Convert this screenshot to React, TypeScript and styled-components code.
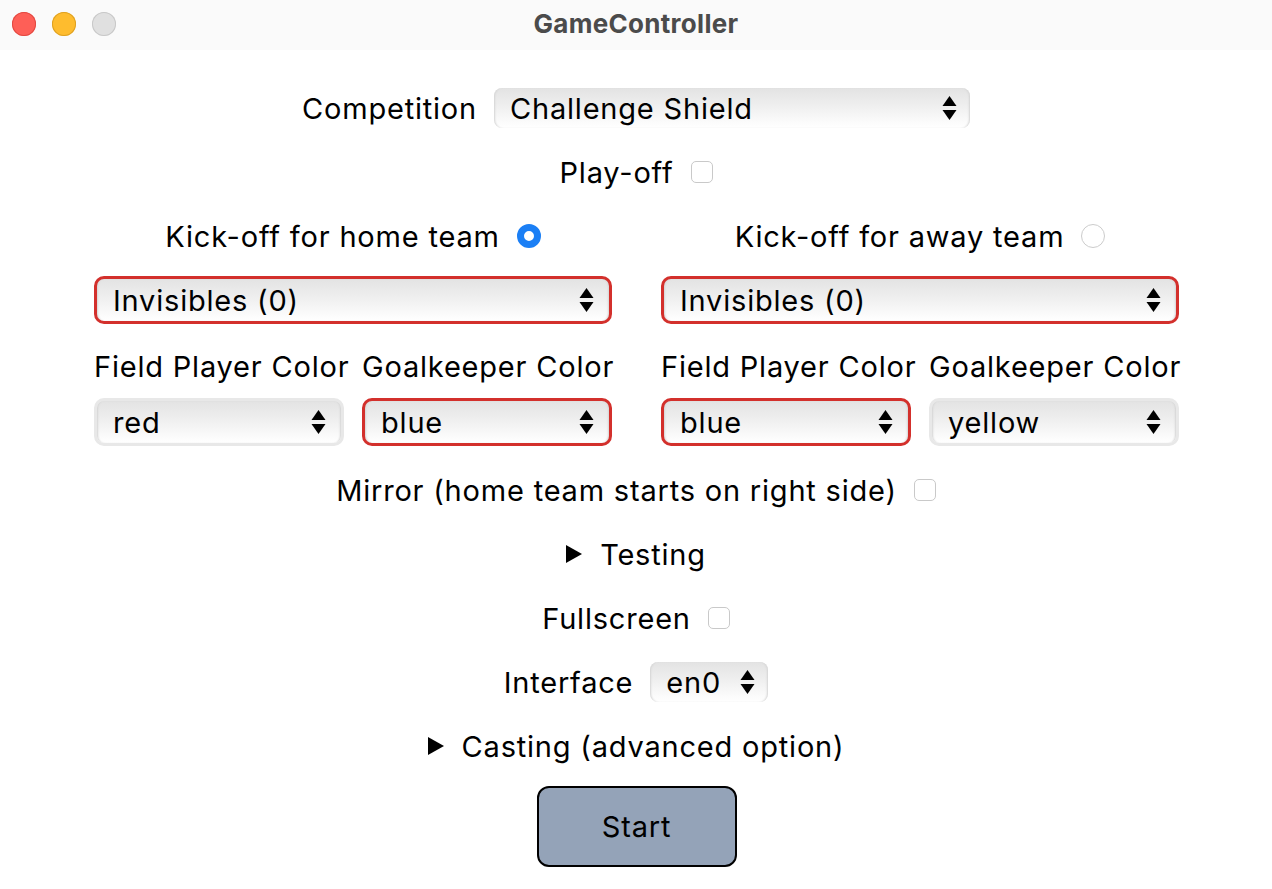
import React from 'react';
import styled, { createGlobalStyle } from 'styled-components';

const GlobalStyle = createGlobalStyle`
  html, body {
    margin: 0;
    padding: 0;
    background: #ffffff;
  }
  body {
    font-family: Inter, "Noto Sans", "Liberation Sans", sans-serif;
    color: #000;
  }
`;

const Window = styled.div`
  width: 1272px;
  height: 889px;
  background: #ffffff;
  overflow: hidden;
`;

const TitleBar = styled.div`
  position: relative;
  height: 50px;
  background: #fafafa;
  display: flex;
  align-items: center;
  justify-content: center;
`;

const Lights = styled.div`
  position: absolute;
  left: 12px;
  top: 12px;
  display: flex;
  gap: 16px;
`;

const Light = styled.span<{ $fill: string; $edge: string }>`
  width: 24px;
  height: 24px;
  border-radius: 50%;
  background: ${(p) => p.$fill};
  box-shadow: inset 0 0 0 1px ${(p) => p.$edge};
`;

const Title = styled.div`
  font-size: 26px;
  font-weight: 700;
  letter-spacing: 0.3px;
  color: #4b4b4b;
  margin-top: -4px;
`;

const Content = styled.div`
  display: flex;
  flex-direction: column;
  align-items: center;
  padding-top: 38px;
  gap: 24px;
  font-size: 29px;
  letter-spacing: 0.8px;
`;

const Row = styled.div`
  height: 40px;
  display: flex;
  align-items: center;
  justify-content: center;
  gap: 17px;
`;

const Teams = styled.div`
  display: grid;
  grid-template-columns: 518px 518px;
  column-gap: 49px;
  margin-left: 1px;
`;

const TeamColumn = styled.div`
  display: flex;
  flex-direction: column;
`;

const ColorGrid = styled.div`
  display: grid;
  grid-template-columns: 250px 250px;
  column-gap: 18px;
  row-gap: 12px;
  margin-top: 22px;
`;

const ColorLabel = styled.div`
  height: 40px;
  display: flex;
  align-items: center;
  white-space: nowrap;
`;

const SelectBox = styled.div<{ $width?: number; $height?: number; $ring?: 'red' | 'grey' | 'none' }>`
  box-sizing: border-box;
  width: ${(p) => (p.$width ? `${p.$width}px` : '100%')};
  height: ${(p) => p.$height ?? 48}px;
  display: flex;
  align-items: center;
  justify-content: space-between;
  padding: 0 ${(p) => (p.$ring === 'none' ? 13 : 15)}px 0 ${(p) => (p.$ring === 'none' ? 16 : 16)}px;
  border-radius: ${(p) => (p.$ring === 'none' ? 8 : 10)}px;
  border: ${(p) =>
    p.$ring === 'red' ? '3px solid #d3302c' : p.$ring === 'grey' ? '3px solid #e8e8e8' : 'none'};
  background: linear-gradient(180deg, #e3e3e3 0%, #efefef 45%, #fbfbfb 85%, #ffffff 100%);
  box-shadow: inset 2px 0 2px -1px #d4d4d4, inset -2px 0 2px -1px #d4d4d4;
  white-space: nowrap;
`;

const SpinnerIcon = () => (
  <svg width="15" height="26" viewBox="0 0 15 26">
    <polygon points="7.5,1 14.5,11 0.5,11" fill="#000" />
    <polygon points="0.5,15 14.5,15 7.5,25" fill="#000" />
  </svg>
);

const Check = styled.span`
  box-sizing: border-box;
  width: 22px;
  height: 22px;
  border-radius: 5px;
  border: 1px solid #c9c9c9;
  background: #fff;
`;

const Radio = styled.span<{ $on?: boolean }>`
  box-sizing: border-box;
  width: 24px;
  height: 24px;
  border-radius: 50%;
  border: ${(p) => (p.$on ? '7px solid #1b7ff5' : '1px solid #cccccc')};
  background: #fff;
`;

const Disclosure = styled.div`
  height: 40px;
  display: flex;
  align-items: center;
  gap: 18px;
`;

const StartButton = styled.button`
  box-sizing: border-box;
  width: 200px;
  height: 81px;
  margin-top: -4px;
  margin-left: 1px;
  border: 2px solid #000;
  border-radius: 12px;
  background: #94a3b8;
  font-family: inherit;
  font-size: 29px;
  letter-spacing: 0.8px;
  color: #000;
`;

const Triangle = () => (
  <svg width="16" height="18" viewBox="0 0 16 18">
    <polygon points="0,0 16,9 0,18" fill="#000" />
  </svg>
);

const Select = ({
  value,
  ring = 'none',
  width,
  height,
}: {
  value: string;
  ring?: 'red' | 'grey' | 'none';
  width?: number;
  height?: number;
}) => (
  <SelectBox $ring={ring} $width={width} $height={height}>
    <span>{value}</span>
    <SpinnerIcon />
  </SelectBox>
);

const Team = ({
  side,
  on,
  field,
  keeper,
}: {
  side: string;
  on: boolean;
  field: { v: string; bad: boolean };
  keeper: { v: string; bad: boolean };
}) => (
  <TeamColumn>
    <Row>
      <span>Kick-off for {side} team</span>
      <Radio $on={on} />
    </Row>
    <div style={{ height: 20 }} />
    <Select value="Invisibles (0)" ring="red" />
    <ColorGrid>
      <ColorLabel>Field Player Color</ColorLabel>
      <ColorLabel>Goalkeeper Color</ColorLabel>
      <Select value={field.v} ring={field.bad ? 'red' : 'grey'} />
      <Select value={keeper.v} ring={keeper.bad ? 'red' : 'grey'} />
    </ColorGrid>
  </TeamColumn>
);

export default function App() {
  return (
    <Window>
      <GlobalStyle />
      <TitleBar>
        <Lights>
          <Light $fill="#fe5f57" $edge="#e24a42" />
          <Light $fill="#febc2e" $edge="#dea123" />
          <Light $fill="#e0e0e0" $edge="#c8c8c8" />
        </Lights>
        <Title>GameController</Title>
      </TitleBar>
      <Content>
        <Row>
          <span>Competition</span>
          <Select value="Challenge Shield" width={476} height={40} />
        </Row>
        <Row>
          <span>Play-off</span>
          <Check />
        </Row>
        <Teams>
          <Team side="home" on field={{ v: 'red', bad: false }} keeper={{ v: 'blue', bad: true }} />
          <Team side="away" on={false} field={{ v: 'blue', bad: true }} keeper={{ v: 'yellow', bad: false }} />
        </Teams>
        <Row>
          <span>Mirror (home team starts on right side)</span>
          <Check />
        </Row>
        <Disclosure>
          <Triangle />
          <span>Testing</span>
        </Disclosure>
        <Row>
          <span>Fullscreen</span>
          <Check />
        </Row>
        <Row>
          <span>Interface</span>
          <Select value="en0" width={118} height={40} />
        </Row>
        <Disclosure>
          <Triangle />
          <span>Casting (advanced option)</span>
        </Disclosure>
        <StartButton>Start</StartButton>
      </Content>
    </Window>
  );
}
